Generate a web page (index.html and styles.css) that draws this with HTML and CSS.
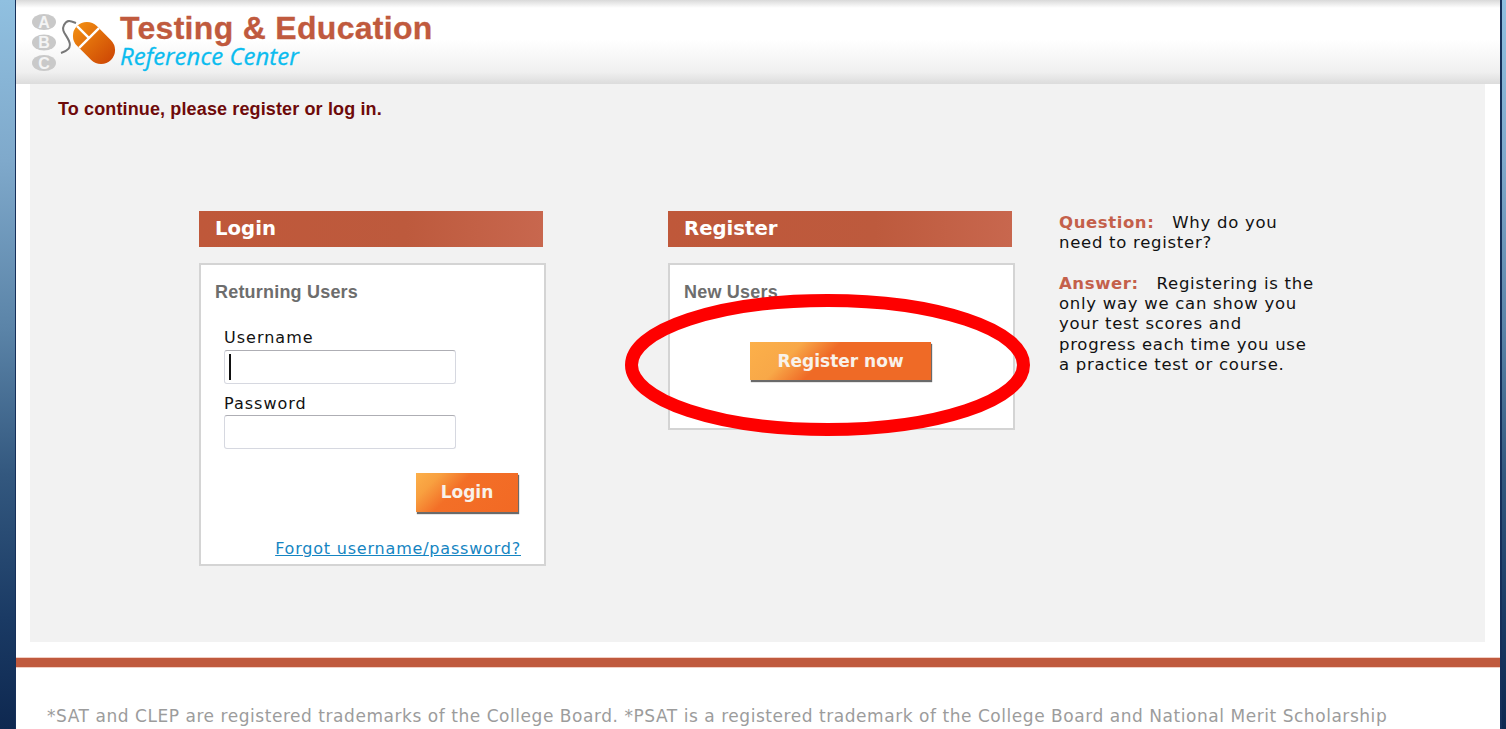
FILE: index.html
```html
<!DOCTYPE html>
<html lang="en">
<head>
<meta charset="utf-8">
<title>Testing &amp; Education Reference Center</title>
<link rel="stylesheet" href="styles.css">
</head>
<body>
<div class="frame">
  <div class="edge edge-left"></div>
  <div class="page">
    <header class="masthead">
      <div class="logo">
        <svg class="logo-mark" width="86" height="62" viewBox="0 0 86 62" aria-hidden="true">
          <ellipse cx="13" cy="9" rx="12" ry="8" fill="#c9c9c9"/>
          <ellipse cx="13" cy="29.5" rx="12" ry="8" fill="#c9c9c9"/>
          <ellipse cx="13" cy="50" rx="12" ry="8" fill="#c9c9c9"/>
          <text x="13" y="14.5" class="logo-letter">A</text>
          <text x="13" y="35" class="logo-letter">B</text>
          <text x="13" y="55.5" class="logo-letter">C</text>
          <path d="M30 40C36 38 41 35 38 28S30 18 33 12 40 8 45 10" fill="none" stroke="#777" stroke-width="2"/>
          <defs>
            <linearGradient id="mouseFill" x1="0" y1="0" x2="0" y2="1">
              <stop offset="0" stop-color="#f08a10"/>
              <stop offset="1" stop-color="#cf4a05"/>
            </linearGradient>
          </defs>
          <g transform="rotate(-45 63 30)">
            <rect x="49" y="6" width="28" height="48" rx="14" fill="url(#mouseFill)"/>
            <path d="M49 23H77M63 6V23" stroke="#fff" stroke-width="2.4" fill="none"/>
          </g>
        </svg>
        <div class="logo-text">
          <div class="logo-title">Testing &amp; Education</div>
          <div class="logo-sub">Reference Center</div>
        </div>
      </div>
    </header>
    <main class="panel">
      <p class="notice">To continue, please register or log in.</p>
      <div class="columns">
        <section class="col">
          <h2 class="col-head">Login</h2>
          <div class="box box-login">
            <h3 class="box-title">Returning Users</h3>
            <label class="field-label" for="user">Username</label>
            <div class="input input-active" id="user"><span class="caret"></span></div>
            <label class="field-label field-label-2" for="pass">Password</label>
            <div class="input" id="pass"></div>
            <div class="btn-row"><a class="btn btn-login">Login</a></div>
            <div class="forgot-row"><a class="forgot">Forgot username/password?</a></div>
          </div>
        </section>
        <section class="col col-reg">
          <h2 class="col-head">Register</h2>
          <div class="box box-reg">
            <h3 class="box-title">New Users</h3>
            <div class="reg-row"><a class="btn btn-reg">Register now</a></div>
          </div>
        </section>
        <aside class="faq">
          <p><b class="faq-key">Question:</b>&nbsp;&nbsp; Why do you<br>need to register?</p>
          <p><b class="faq-key">Answer:</b>&nbsp;&nbsp; Registering is the<br>only way we can show you<br>your test scores and<br>progress each time you use<br>a practice test or course.</p>
        </aside>
      </div>
    </main>
    <div class="rule"></div>
    <footer class="legal">*SAT and CLEP are registered trademarks of the College Board. *PSAT is a registered trademark of the College Board and National Merit Scholarship</footer>
  </div>
  <div class="edge edge-right"></div>
</div>
<svg class="ring" width="405" height="142" viewBox="0 0 405 142" aria-hidden="true">
  <ellipse cx="202.5" cy="71" rx="196" ry="64.5" fill="none" stroke="#fe0000" stroke-width="13"/>
</svg>
</body>
</html>
```
FILE: styles.css
```css
html, body { margin: 0; padding: 0; height: 100%; overflow: hidden; background: #fff; }
body { font-family: "DejaVu Sans", Verdana, sans-serif; position: relative; }
.frame { display: flex; height: 729px; }
.edge { flex: none; background: linear-gradient(180deg, #90c0e0 0, #7fa9cb 22%, #5b84a8 45%, #33587f 65%, #1a3a64 85%, #0e2850 100%); }
.edge-left { width: 15px; border-right: 1px solid #16305a; }
.edge-right { width: 4px; border-left: 2px solid #16305a; }
.page { flex: 1; min-width: 0; overflow: hidden; background: #fff; }

.masthead { height: 84px; box-sizing: border-box; padding: 10px 0 0 15px; background: linear-gradient(180deg, #d9d9d9 0, #e8e8e8 3px, #fff 8px, #fff 40px, #f0f0f0 72px, #dcdcdc 84px); }
.logo { display: flex; align-items: flex-start; }
.logo-mark { flex: none; margin-top: 3px; }
.logo-letter { font: 700 16px "Liberation Sans", sans-serif; fill: #f4f4f4; text-anchor: middle; }
.logo-text { margin-left: 3px; }
.logo-title { font: 700 32px/36px "Liberation Sans", Arial, sans-serif; letter-spacing: 0.3px; color: #c05a3e; -webkit-text-stroke: 0.3px #c05a3e; }
.logo-sub { font: italic 400 24px/20px "Open Sans", sans-serif; color: #0bbcef; -webkit-text-stroke: 0.3px #0bbcef; }

.panel { margin-left: 14px; width: 1455px; height: 558px; box-sizing: border-box; background: #f2f2f2; padding-top: 14px; overflow: hidden; }
.notice { margin: 0 0 0 28px; font: 700 18px/22px "Liberation Sans", Arial, sans-serif; letter-spacing: 0.13px; color: #6e0a0a; }
.columns { display: flex; align-items: flex-start; margin: 91px 0 0 169px; }
.col { flex: none; width: 347px; }
.col-reg { margin-left: 122px; }
.col-head { margin: 0; width: 344px; height: 36px; box-sizing: border-box; padding-left: 16px; font: 700 19.7px/36px "DejaVu Sans", sans-serif; color: #fff; background: linear-gradient(90deg, #bf583a 0, #bd5a3d 60%, #c8674e 100%); }
.box { margin-top: 16px; box-sizing: border-box; border: 2px solid #d4d4d4; background: #fff; padding: 15px 14px 0; }
.box-login { height: 303px; }
.box-reg { height: 167px; }
.box-title { margin: 0; font: 700 18px/24px "Liberation Sans", Arial, sans-serif; letter-spacing: 0.2px; color: #6d6d6d; }
.field-label { display: block; margin: 24px 0 0 9px; font-size: 16px; line-height: 20px; letter-spacing: 1px; color: #111; }
.field-label-2 { margin-top: 11px; line-height: 18px; }
.input { margin: 2px 0 0 9px; width: 232px; height: 34px; box-sizing: border-box; border: 1px solid #d6d8e0; border-top-color: #aeaeb4; border-radius: 3px; background: #fff; display: flex; align-items: center; padding-left: 4px; }
.caret { display: block; width: 2px; height: 26px; background: #111; }
.btn { display: block; box-sizing: border-box; color: #f8f2ea; font: 700 17px/39px "DejaVu Sans", sans-serif; text-align: center; box-shadow: 1px 2px 1px #6a6a6a; }
.btn-row { display: flex; justify-content: flex-end; margin: 24px 12px 0 0; }
.btn-login { width: 102px; height: 39px; background: linear-gradient(135deg, #fcb04a 0, #f8a040 18%, #f36f27 40%, #f26924 100%); }
.forgot-row { display: flex; justify-content: flex-end; margin: 27px 9px 0 0; }
.forgot { font-size: 16px; line-height: 20px; letter-spacing: 0.8px; color: #1585c2; text-decoration: underline; }
.reg-row { display: flex; justify-content: flex-start; margin-top: 38px; padding-left: 66px; }
.btn-reg { width: 181px; height: 38px; line-height: 38px; background: linear-gradient(135deg, #fcb04a 0, #f8a848 24%, #ef6a26 42%, #ef6a26 100%); }
.faq { flex: none; margin: 2px 0 0 44px; width: 290px; font-size: 16.5px; line-height: 20.3px; letter-spacing: 0.72px; color: #111; }
.faq p { margin: 0 0 20.3px; }
.faq-key { color: #c4604a; letter-spacing: 0.6px; }

.rule { margin-top: 16px; height: 9px; background: #c05a3e; box-shadow: 0 0 0 1px #f2cfc4; }
.legal { margin: 38px 0 0 31px; white-space: nowrap; font-size: 17px; line-height: 22px; letter-spacing: 0.545px; color: #9c9c9c; }

.ring { position: absolute; left: 625px; top: 294px; }
```
